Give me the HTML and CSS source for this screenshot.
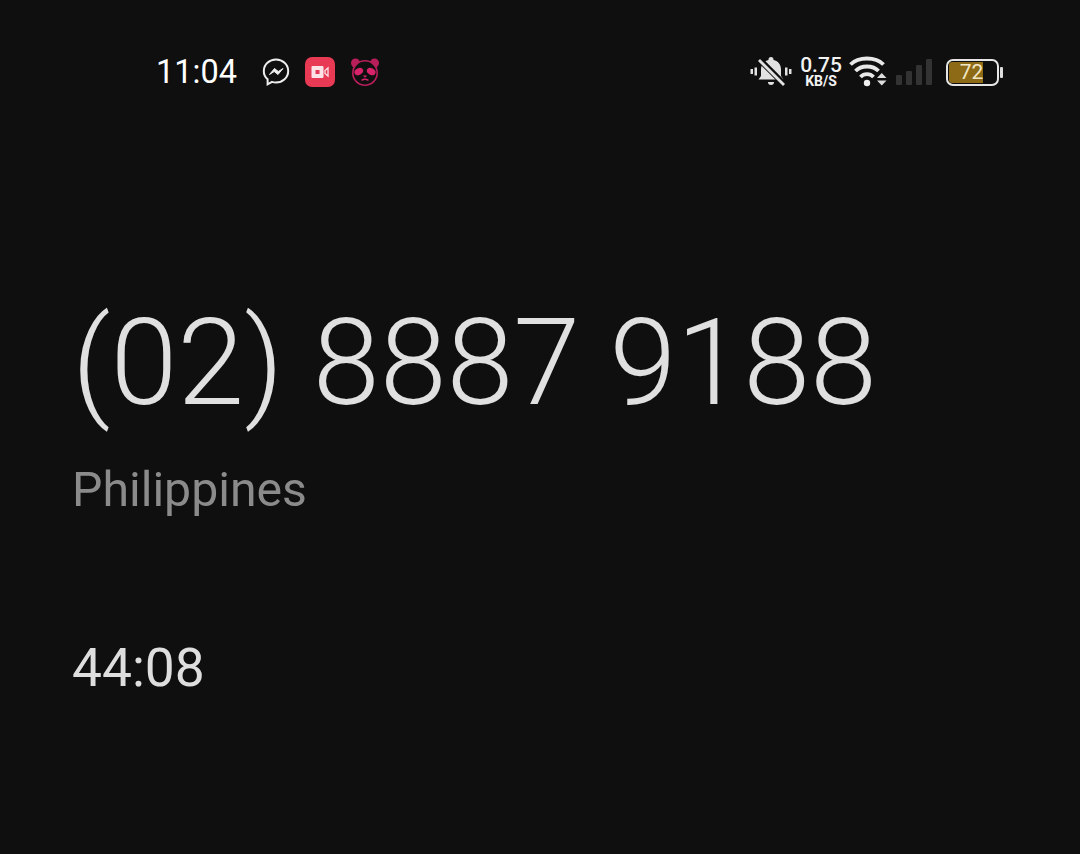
FILE: index.html
```html
<!DOCTYPE html>
<html lang="en">
<head>
<meta charset="utf-8">
<title>Call</title>
<link rel="stylesheet" href="styles.css">
</head>
<body>
<div class="screen">
  <header class="status">
    <div class="status-left">
      <span class="time">11:04</span>
      <div class="notif">
        <svg width="28" height="30" viewBox="0 0 28 30"><path d="M14 2.500C7.400 2.500 1.800 7.400 1.800 14c0 3.400 1.400 6.300 3.800 8.300v5l4.400-2.400c1.300.4 2.600.6 4 .6 6.600 0 12.200-4.900 12.200-11.500S20.600 2.500 14 2.500z" fill="none" stroke="#eee" stroke-width="2"/><path d="M7.500 17.500l5-6 3.800 3 4.700-3-5 6-3.800-3z" fill="#eee" stroke="#eee" stroke-width="1" stroke-linejoin="round"/></svg>
        <div class="rec">
          <svg width="18" height="14" viewBox="0 0 18 14"><rect x="0.500" y="1" width="12" height="12" rx="1" fill="#fbe3e7"/><rect x="4.500" y="5" width="4" height="4" fill="#e83a55"/><path d="M14 5.500l3-2.500v8l-3-2.500z" fill="none" stroke="#fbe3e7" stroke-width="1.300"/></svg>
        </div>
        <svg width="30" height="30" viewBox="0 0 30 30"><circle cx="5.500" cy="6" r="4.500" fill="#b81f5a"/><circle cx="24.500" cy="6" r="4.500" fill="#b81f5a"/><circle cx="15" cy="16" r="13" fill="#b81f5a"/><circle cx="15" cy="16" r="11.400" fill="#0f0f0f"/><ellipse cx="8.800" cy="14.500" rx="4.600" ry="3.300" transform="rotate(-28 8.800 14.500)" fill="#d8226a"/><ellipse cx="21.200" cy="14.500" rx="4.600" ry="3.300" transform="rotate(28 21.200 14.500)" fill="#d8226a"/><path d="M12.800 18.500h4.400l-2.200 2.200z" fill="#d8226a"/><path d="M11.500 23.300q3.500-2 7 0" fill="none" stroke="#d8226a" stroke-width="1.400"/></svg>
      </div>
    </div>
    <div class="status-right">
      <svg class="bell" width="42" height="32" viewBox="0 0 42 32"><path d="M21 1a2.500 2.500 0 0 1 2.500 2.500v.6c5 1.100 7.500 5 7.500 9.400v6.500l2.500 3.500H8.500l2.500-3.500v-6.500c0-4.400 2.500-8.300 7.500-9.400v-.6A2.500 2.500 0 0 1 21 1z" fill="#e2e2e2"/><path d="M18 26h6a3 3 0 0 1-6 0z" fill="#e2e2e2"/><path d="M8 2l26 26" stroke="#0f0f0f" stroke-width="6"/><path d="M9 4l25 25" stroke="#e2e2e2" stroke-width="2.800"/><rect x="0.500" y="13" width="2.500" height="5" fill="#e2e2e2"/><rect x="4.500" y="11.500" width="2.500" height="8" fill="#e2e2e2"/><rect x="35" y="11.500" width="2.500" height="8" fill="#e2e2e2"/><rect x="39" y="13" width="2.500" height="5" fill="#e2e2e2"/></svg>
      <div class="speed"><span class="speed-num">0.75</span><span class="speed-unit">KB/S</span></div>
      <svg class="wifi" width="38" height="32" viewBox="0 0 38 32"><path d="M1.500 8.500C9.500 .5 26.500 .5 34.500 8.500M6.500 15C12 9 24 9 29.500 15M11.500 21c3.500-3.800 9.500-3.800 13 0" fill="none" stroke="#e8e8e8" stroke-width="3.800"/><circle cx="18" cy="27" r="3.200" fill="#efefef"/><path d="M28 22h9.500l-4.750-5zM28 24.500h9.500l-4.750 5z" fill="#ddd"/></svg>
      <svg class="signal" width="36" height="28" viewBox="0 0 36 28"><rect x="0" y="17" width="6" height="10" rx="1.200" fill="#333"/><rect x="10" y="13" width="6" height="14" rx="1.200" fill="#333"/><rect x="20" y="7" width="6" height="20" rx="1.200" fill="#333"/><rect x="30" y="1" width="6" height="26" rx="1.200" fill="#333"/></svg>
      <div class="battery">
        <div class="batt-body"><div class="batt-fill"></div><span class="batt-num">72</span></div>
        <div class="batt-cap"></div>
      </div>
    </div>
  </header>
  <main class="call">
    <h1 class="number">(02) 8887 9188</h1>
    <p class="region">Philippines</p>
    <p class="timer">44:08</p>
  </main>
</div>
</body>
</html>
```
FILE: styles.css
```css
* { box-sizing: border-box; margin: 0; padding: 0; }
html, body { width: 1080px; height: 854px; overflow: hidden; background: #0f0f0f; }
body { font-family: Roboto, "Liberation Sans", sans-serif; }
.screen { width: 1080px; height: 854px; display: flex; flex-direction: column; }
.status { display: flex; justify-content: space-between; align-items: center; height: 32px; margin-top: 56px; padding: 0 77px 0 156px; }
.status-left, .notif, .status-right { display: flex; align-items: center; }
.time { font-size: 32.500px; font-weight: 400; color: #fff; width: 106px; }
.notif { gap: 15px; }
.rec { width: 30px; height: 30px; border-radius: 7px; background: #e83a55; display: flex; align-items: center; justify-content: center; }
.speed { display: flex; flex-direction: column; align-items: center; color: #f2f2f2; width: 42px; margin-left: 8px; }
.speed-num { font-size: 21px; font-weight: 500; height: 17px; line-height: 17px; }
.speed-unit { font-size: 14px; font-weight: 700; height: 13px; line-height: 13px; margin-top: 1px; white-space: nowrap; }
.wifi { margin-left: 7px; }
.signal { margin-left: 9px; }
.battery { display: flex; align-items: center; gap: 1px; margin-left: 14px; }
.batt-body { position: relative; width: 53px; height: 27px; border: 2px solid #e6e6e6; border-radius: 7px; padding: 1px; }
.batt-fill { width: 34px; height: 100%; background: #8d6b16; border-radius: 3px 0 0 3px; }
.batt-num { position: absolute; left: 0; right: 2px; top: 0; text-align: center; font-size: 21px; line-height: 23px; color: #f3e6c4; }
.batt-cap { width: 3px; height: 11px; background: #ddd; border-radius: 1px; }
.call { padding-left: 72px; }
.number { font-size: 120.500px; font-weight: 300; color: #e0e0e0; line-height: 136px; margin-top: 207px; white-space: nowrap; }
.region { font-size: 48.200px; color: #8b8b8b; line-height: 56px; margin-top: 31px; }
.timer { font-size: 53.300px; color: #dedede; line-height: 60px; margin-top: 120px; }
```
